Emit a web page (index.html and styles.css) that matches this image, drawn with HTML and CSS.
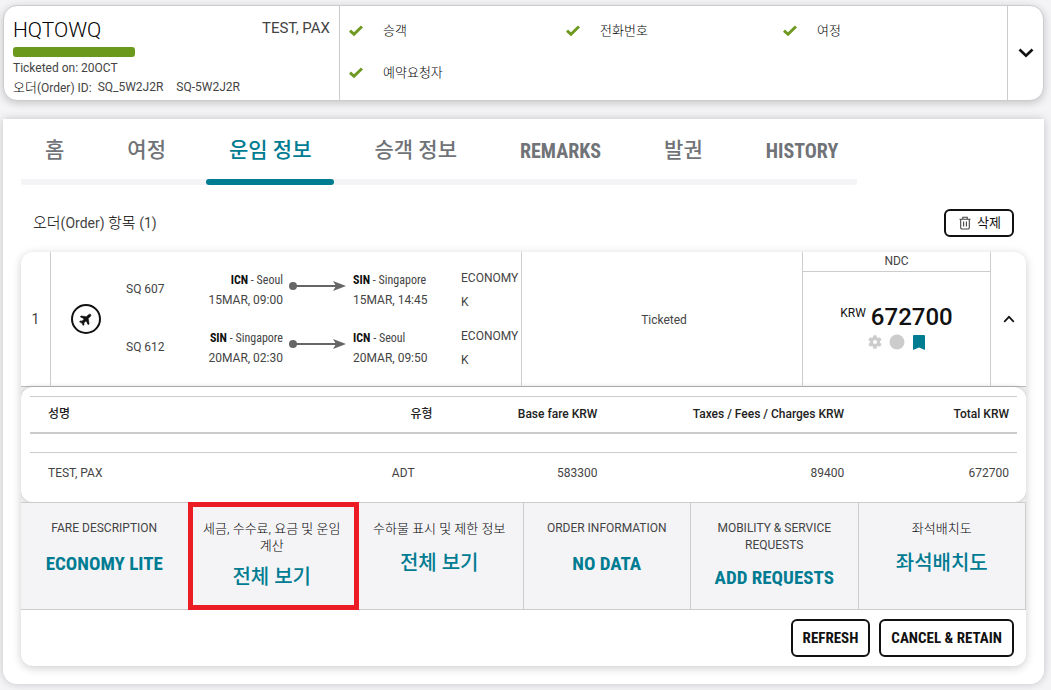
FILE: index.html
```html
<!DOCTYPE html>
<html lang="ko">
<head>
<meta charset="utf-8">
<meta name="viewport" content="width=device-width, initial-scale=1">
<title>HQTOWQ</title>
<link rel="stylesheet" href="styles.css">
</head>
<body>
<svg class="defs" aria-hidden="true">
  <symbol id="check" viewBox="0 0 14 12"><path d="M1 5.7 5 9.3 13 1.500" fill="none" stroke="#6f9a22" stroke-width="3"/></symbol>
  <symbol id="arrow" viewBox="0 0 57 10"><circle cx="4" cy="5" r="4" fill="#666"/><path d="M5 5H48" stroke="#666" stroke-width="2"/><path d="M44 0 57 5 44 10 47 5Z" fill="#666"/></symbol>
</svg>
<header class="summary">
  <div class="booking">
    <div class="booking-top"><h1 class="locator">HQTOWQ</h1><span class="pax">TEST, PAX</span></div>
    <div class="progress"></div>
    <div class="booking-line">Ticketed on: 20OCT</div>
    <div class="booking-line order-ids"><span><span class="hangul">오더</span>(Order) ID:</span><span>SQ_5W2J2R</span><span class="second-id">SQ-5W2J2R</span></div>
  </div>
  <ul class="checks">
    <li><svg class="check"><use href="#check"/></svg>승객</li>
    <li><svg class="check"><use href="#check"/></svg>전화번호</li>
    <li><svg class="check"><use href="#check"/></svg>여정</li>
    <li><svg class="check"><use href="#check"/></svg>예약요청자</li>
  </ul>
  <button class="expand" type="button" aria-label="펼치기"><svg width="16" height="10" viewBox="0 0 16 10"><path d="M1.5 1.5 8 7.8 14.5 1.5" fill="none" stroke="#111" stroke-width="2.6"/></svg></button>
</header>

<main class="panel">
  <nav class="tabs">
    <a class="tab" href="#home">홈</a>
    <a class="tab" href="#itinerary">여정</a>
    <a class="tab active" href="#fare" aria-current="page">운임 정보</a>
    <a class="tab" href="#passenger">승객 정보</a>
    <a class="tab latin" href="#remarks">REMARKS</a>
    <a class="tab" href="#ticketing">발권</a>
    <a class="tab latin" href="#history">HISTORY</a>
  </nav>

  <div class="section-head">
    <h2 class="section-title"><span class="hangul">오더</span>(Order) <span class="hangul">항목</span> (1)</h2>
    <button class="outline small" type="button">
      <svg width="12" height="14" viewBox="0 0 12 14" fill="none" stroke="#444" stroke-width="1.1"><path d="M.5 3.2h11M3.8 3V1.2h4.4V3M1.7 3.5v8.2q0 1.3 1.3 1.3h6q1.3 0 1.3-1.3V3.5M4.6 5.5v5M7.4 5.5v5"/></svg>삭제
    </button>
  </div>

  <article class="item">
    <div class="item-row">
      <div class="cell index">1</div>
      <div class="cell flights">
        <svg class="plane" viewBox="0 0 30 30"><circle cx="15" cy="15" r="14" fill="#fff" stroke="#111" stroke-width="2"/><path transform="translate(15 15) rotate(45) scale(.62) translate(-12 -12)" fill="#111" stroke="#111" d="M21 16v-2l-7-5V4.2Q14 2 12 1.500Q10 2 10 4.200V9l-7 5v2l7-2.200V19l-2.200 1.700V22.500L12 21.300l4.200 1.200V20.700L14 19v-5.200z"/></svg>
        <div class="segments">
          <div class="segment">
            <span class="number">SQ 607</span>
            <div class="place dep"><div class="airport"><b>ICN</b> - Seoul</div><div>15MAR, 09:00</div></div>
            <svg class="arrow"><use href="#arrow"/></svg>
            <div class="place"><div class="airport"><b>SIN</b> - Singapore</div><div>15MAR, 14:45</div></div>
            <div class="cabin"><div>ECONOMY</div><div>K</div></div>
          </div>
          <div class="segment">
            <span class="number">SQ 612</span>
            <div class="place dep"><div class="airport"><b>SIN</b> - Singapore</div><div>20MAR, 02:30</div></div>
            <svg class="arrow"><use href="#arrow"/></svg>
            <div class="place"><div class="airport"><b>ICN</b> - Seoul</div><div>20MAR, 09:50</div></div>
            <div class="cabin"><div>ECONOMY</div><div>K</div></div>
          </div>
        </div>
      </div>
      <div class="cell status">Ticketed</div>
      <div class="cell price">
        <div class="source">NDC</div>
        <div class="amount-box">
          <div class="amount"><span class="currency">KRW</span>672700</div>
          <div class="flags">
            <svg width="16" height="16" viewBox="0 0 24 24" fill="#ccc"><path fill-rule="evenodd" d="M19.400 13a7.500 7.500 0 0 0 0-2l2.200-1.700a.5.500 0 0 0 .1-.7l-2-3.400a.5.500 0 0 0-.6-.2l-2.600 1a7.600 7.600 0 0 0-1.700-1l-.4-2.600a.5.500 0 0 0-.5-.4h-4a.5.500 0 0 0-.5.400L9 5a7.600 7.600 0 0 0-1.700 1L4.800 5a.5.500 0 0 0-.6.200l-2 3.400a.5.500 0 0 0 .1.700L4.500 11a7.500 7.500 0 0 0 0 2l-2.200 1.700a.5.500 0 0 0-.1.700l2 3.400q.2.300.6.200l2.500-1a7.600 7.600 0 0 0 1.700 1l.4 2.600q.1.400.5.400h4q.4 0 .5-.4l.4-2.600a7.600 7.600 0 0 0 1.700-1l2.600 1q.4.100.6-.2l2-3.400a.5.500 0 0 0-.1-.7zM12 15a3 3 0 1 1 0-6 3 3 0 0 1 0 6z"/></svg>
            <svg width="16" height="16"><circle cx="8" cy="8" r="7.500" fill="#ccc"/></svg>
            <svg class="bookmark" width="12" height="15"><path d="M1 0h10q1 0 1 1v14l-6-2.500-6 2.500V1q0-1 1-1z" fill="#007c92"/></svg>
          </div>
        </div>
      </div>
      <button class="cell toggle" type="button" aria-label="접기"><svg width="12" height="8" viewBox="0 0 12 8"><path d="M1.200 6.800 6 1.800 10.800 6.800" fill="none" stroke="#111" stroke-width="1.700"/></svg></button>
    </div>

    <div class="fares-wrap">
      <div class="fares">
        <table class="fare-table">
          <colgroup><col class="c-name"><col class="c-type"><col class="c-base"><col class="c-tax"><col class="c-total"></colgroup>
          <thead><tr><th>성명</th><th>유형</th><th>Base fare KRW</th><th>Taxes / Fees / Charges KRW</th><th>Total KRW</th></tr></thead>
          <tbody>
            <tr class="spacer"><td colspan="5"></td></tr>
            <tr><td>TEST, PAX</td><td class="type">ADT</td><td>583300</td><td>89400</td><td>672700</td></tr>
          </tbody>
        </table>
      </div>
    </div>

    <div class="services">
      <div class="service"><div class="service-name">FARE DESCRIPTION</div><a class="service-link" href="#economy-lite">ECONOMY LITE</a></div>
      <div class="service marked"><div class="service-name hangul">세금, 수수료, 요금 및 운임 계산</div><a class="service-link ko" href="#taxes">전체 보기</a></div>
      <div class="service"><div class="service-name hangul">수하물 표시 및 제한 정보</div><a class="service-link ko" href="#baggage">전체 보기</a></div>
      <div class="service"><div class="service-name">ORDER INFORMATION</div><a class="service-link" href="#order">NO DATA</a></div>
      <div class="service"><div class="service-name">MOBILITY &amp; SERVICE REQUESTS</div><a class="service-link" href="#requests">ADD REQUESTS</a></div>
      <div class="service"><div class="service-name hangul">좌석배치도</div><a class="service-link ko" href="#seatmap">좌석배치도</a></div>
    </div>

    <footer class="actions">
      <button class="outline" type="button">REFRESH</button>
      <button class="outline" type="button">CANCEL &amp; RETAIN</button>
    </footer>
  </article>
</main>
</body>
</html>
```
FILE: styles.css
```css
* { box-sizing: border-box; }

body {
  margin: 0;
  padding: 5px 7px 6px 3px;
  background: #f4f4f7;
  color: #444;
  font: 400 12px/18px Roboto, "Noto Sans CJK KR", sans-serif;
}

h1, h2, ul { margin: 0; padding: 0; font-weight: inherit; }
a { color: inherit; text-decoration: none; }
button { margin: 0; color: inherit; font: inherit; cursor: pointer; }
svg { display: block; flex: none; }
.defs { position: absolute; width: 0; height: 0; }
.hangul { font-size: 13px; font-weight: 300; color: #000; }

.summary {
  display: grid;
  grid-template-columns: 336px 1fr 36px;
  min-height: 96px;
  border: 1px solid #ccc;
  border-radius: 14px;
  background: #fff;
  box-shadow: 0 2px 8px rgba(0, 0, 0, .2);
}
.booking { padding: 10px 9px 0; border-right: 1px solid #ccc; }
.booking-top { display: flex; justify-content: space-between; }
.locator { font-size: 21px; font-weight: 300; line-height: 28px; color: #000; }
.pax { font-size: 15px; line-height: 24px; }
.progress { width: 122px; height: 10px; margin: 3px 0 2px; border-radius: 3px; background: #6b991b; }
.booking-line { line-height: 18px; }
.order-ids { display: flex; gap: 6px; line-height: 21px; }
.second-id { margin-left: 7px; }
.checks {
  display: grid;
  grid-template-columns: repeat(3, 1fr);
  grid-auto-rows: 42px;
  padding: 4px 7px 0 9px;
  list-style: none;
  font-size: 13px;
  font-weight: 300;
  color: #000;
}
.checks li { display: flex; align-items: center; gap: 20px; }
.check { width: 14px; height: 12px; }
.expand {
  display: grid;
  place-items: center;
  padding: 0;
  border: 0;
  border-left: 1px solid #ccc;
  background: none;
}

.panel {
  margin-top: 18px;
  padding: 0 18px 18px;
  border-radius: 0 0 14px 14px;
  background: #fff;
  box-shadow: 0 0 8px rgba(0, 0, 0, .2);
}

.tabs {
  display: flex;
  gap: 17px;
  width: fit-content;
  padding-left: 1px;
  border-radius: 3px;
  background: linear-gradient(#f4f4f6, #f4f4f6) bottom / 100% 6px no-repeat;
}
.tab {
  position: relative;
  height: 66px;
  padding: 0 23px;
  color: #707377;
  font-size: 21px;
  font-weight: 500;
  line-height: 62px;
}
.tab.latin { font: 700 20px/65px "Roboto Condensed", Roboto, sans-serif; }
.tab:last-child { padding-right: 19px; }
.tab.active { color: #007c92; }
.tab.active::after {
  content: "";
  position: absolute;
  inset: auto 0 0;
  height: 6px;
  border-radius: 3px;
  background: #007c92;
}

.section-head {
  display: flex;
  align-items: center;
  justify-content: space-between;
  padding: 24px 12px 15px;
}
.section-title { font-size: 14px; line-height: 24px; }
.section-title .hangul { font-size: 15px; }

.outline {
  height: 38px;
  padding: 0 10px;
  border: 2px solid #111;
  border-radius: 6px;
  background: #fff;
  color: #111;
  font: 700 15px/20px "Roboto Condensed", Roboto, "Noto Sans CJK KR", sans-serif;
}
.outline.small {
  display: flex;
  align-items: center;
  gap: 6px;
  height: 28px;
  padding: 0 11px 0 13px;
  font-size: 13px;
  font-weight: 400;
}

.item {
  overflow: hidden;
  border-radius: 12px;
  background: #fff;
  box-shadow: 0 2px 10px rgba(0, 0, 0, .2);
}
.item-row {
  display: grid;
  grid-template-columns: 30px 471fr 281fr 188fr 35px;
  min-height: 135px;
  border-bottom: 1px solid #bbb;
}
.cell { border-right: 1px solid #ccc; }
.index, .status { display: grid; place-items: center; }
.index { font-size: 14px; }
.status { padding: 2px 0 0 4px; }
.flights { display: flex; align-items: center; gap: 25px; padding-left: 20px; }
.plane { width: 30px; height: 30px; }
.segments { flex: 1; }
.segment {
  display: grid;
  grid-template-columns: 60fr 97fr 70px 108fr 60px;
  align-items: center;
  min-height: 58px;
}
.number { padding-bottom: 2px; }
.place { line-height: 20px; white-space: nowrap; }
.airport { font-family: "Roboto Condensed", Roboto, sans-serif; }
.airport b { color: #111; font-weight: 700; }
.dep { text-align: right; }
.arrow { width: 57px; height: 10px; margin: 0 0 8px 6px; }
.cabin { line-height: 24px; }
.price { display: flex; flex-direction: column; text-align: center; }
.source { border-bottom: 1px solid #ccc; line-height: 19px; }
.amount-box {
  display: flex;
  flex: 1;
  flex-direction: column;
  align-items: center;
  justify-content: center;
  gap: 3px;
  padding-bottom: 5px;
}
.amount { display: flex; gap: 5px; color: #111; font-size: 24px; font-weight: 500; line-height: 28px; }
.currency { font-size: 12px; font-weight: 400; line-height: 20px; }
.flags { display: flex; align-items: center; gap: 6px; padding-right: 2px; }
.bookmark { margin-left: 2px; }
.toggle { display: grid; place-items: center; padding: 0; border: 0; background: none; }

.fares-wrap { background: #f1f1f3; }
.fares {
  padding: 9px;
  border-radius: 12px;
  background: #fff;
  box-shadow: 0 0 5px rgba(0, 0, 0, .2);
}
.fare-table { width: 100%; border-collapse: collapse; table-layout: fixed; }
.c-name { width: 25%; }
.c-type { width: 16.6%; }
.c-base { width: 16.7%; }
.c-tax { width: 25%; }
.c-total { width: 16.7%; }
th, td { padding: 0 8px; text-align: right; }
th { height: 36px; border-top: 1px solid #ccc; border-bottom: 2px solid #ccc; color: #222; font-weight: 500; }
th:first-child, td:first-child { padding-left: 18px; text-align: left; }
td { height: 40px; }
.spacer td { height: 20px; border-bottom: 1px solid #ccc; }
td.type { padding-right: 26px; }

.services {
  display: grid;
  grid-template-columns: repeat(6, 1fr);
  min-height: 108px;
  border-top: 1px solid #ccc;
  border-bottom: 1px solid #ccc;
  background: #f4f4f7;
}
.service {
  position: relative;
  display: flex;
  flex-direction: column;
  align-items: center;
  gap: 9px;
  padding: 17px 12px 12px;
  border-right: 1px solid #ccc;
  text-align: center;
}
.service-name { min-height: 20px; line-height: 17px; word-break: keep-all; }
.service-link { color: #007c92; font: 700 19px/29px "Roboto Condensed", Roboto, sans-serif; }
.service-link.ko { font: 500 20px/28px Roboto, "Noto Sans CJK KR", sans-serif; }
.marked::after {
  content: "";
  position: absolute;
  inset: -1px -4px -1px -1px;
  z-index: 1;
  border: 5px solid #eb1c24;
  pointer-events: none;
}
.actions { display: flex; justify-content: flex-end; gap: 9px; padding: 9px 12px; }
```
